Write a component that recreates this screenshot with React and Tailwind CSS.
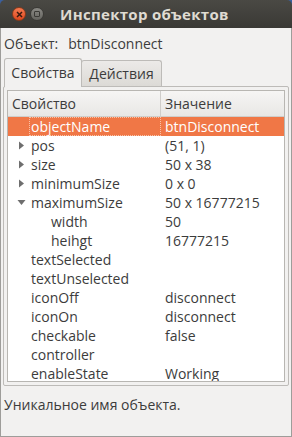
import React from "react";

const rows = [
  { name: "objectName", value: "btnDisconnect", sel: true, level: 0 },
  { name: "pos", value: "(51, 1)", arrow: "right", level: 0 },
  { name: "size", value: "50 x 38", arrow: "right", level: 0 },
  { name: "minimumSize", value: "0 x 0", arrow: "right", level: 0 },
  { name: "maximumSize", value: "50 x 16777215", arrow: "down", level: 0 },
  { name: "width", value: "50", level: 1 },
  { name: "heihgt", value: "16777215", level: 1 },
  { name: "textSelected", value: "", level: 0 },
  { name: "textUnselected", value: "", level: 0 },
  { name: "iconOff", value: "disconnect", level: 0 },
  { name: "iconOn", value: "disconnect", level: 0 },
  { name: "checkable", value: "false", level: 0 },
  { name: "controller", value: "", level: 0 },
  { name: "enableState", value: "Working", level: 0 },
];

function Arrow({ dir }) {
  if (dir === "right")
    return (
      <svg width="7" height="9" viewBox="0 0 7 9" className="absolute left-[10px] top-[5px]">
        <path d="M1 0.5 L6 4.5 L1 8.5 Z" fill="#6e6e6e" />
      </svg>
    );
  return (
    <svg width="9" height="7" viewBox="0 0 9 7" className="absolute left-[9px] top-[6px]">
      <path d="M0.5 1 L8.5 1 L4.5 6 Z" fill="#6e6e6e" />
    </svg>
  );
}

function nameClass(r) {
  if (r.sel)
    return "w-[132px] ml-[21px] pl-[1px] flex items-center border border-dotted border-[#f9c2a8]";
  if (r.level) return "w-[153px] pl-[43px] flex items-center";
  return "w-[153px] pl-[23px] flex items-center";
}

export default function App() {
  return (
    <div
      className="w-[292px] h-[437px] bg-[#3a5f9e] text-[14px] leading-none"
      style={{ fontFamily: '"Open Sans", "Noto Sans", sans-serif' }}
    >
      <div className="w-full h-full flex flex-col rounded-t-[5px] overflow-hidden">
        {/* title bar */}
        <div className="h-[28px] bg-gradient-to-b from-[#4a4944] to-[#3a3935] flex items-center pl-[12px] shrink-0">
          <div className="w-[14px] h-[14px] rounded-full bg-gradient-to-b from-[#f47a50] to-[#e0461c] border border-[#8a3a1a] flex items-center justify-center">
            <svg width="7" height="7" viewBox="0 0 7 7">
              <path d="M1 1 L6 6 M6 1 L1 6" stroke="#3a1a10" strokeWidth="1.5" />
            </svg>
          </div>
          <div className="ml-[4px] w-[14px] h-[14px] rounded-full bg-gradient-to-b from-[#8a8984] to-[#65645f] border border-[#3a3935] flex items-center justify-center">
            <div className="w-[6px] h-[6px] border border-[#3a3935] rounded-[1px]" />
          </div>
          <div className="ml-[16px] text-[#dfdbd2] font-bold text-[15px] tracking-[0.3px]">Инспектор объектов</div>
        </div>
        {/* body */}
        <div className="flex-1 bg-[#f2f1f0] border-x border-b border-[#9e9d9a] flex flex-col text-[#3c3c3c]">
          <div className="h-[30px] flex items-center pl-[3px] pt-[1px]">
            <span>Объект:</span>
            <span className="ml-[10px]">btnDisconnect</span>
          </div>
          {/* tabs */}
          <div className="flex pl-[3px] h-[28px] items-end">
            <div className="h-[29px] w-[78px] -mb-[1px] relative z-10 bg-[#f2f1f0] border border-b-0 border-[#bdbbb8] rounded-t-[3px] flex items-center justify-center pb-[1px]">
              Свойства
            </div>
            <div className="h-[26px] w-[81px] -ml-[1px] bg-gradient-to-b from-[#eceae8] to-[#dcdad6] border border-b-0 border-[#bdbbb8] rounded-t-[3px] flex items-center justify-center">
              Действия
            </div>
          </div>
          <div className="mx-[2px] h-[300px] border border-[#bdbbb8] rounded-[2px] p-[3px]">
            <div className="h-full bg-white border border-[#b8b6b2] flex flex-col overflow-hidden">
              <div className="h-[26px] shrink-0 flex bg-gradient-to-b from-[#f6f5f4] to-[#e8e7e5] border-b border-[#cfcdca]">
                <div className="w-[153px] border-r border-[#cfcdca] flex items-center pl-[4px]">Свойство</div>
                <div className="flex-1 flex items-center pl-[4px]">Значение</div>
              </div>
              {rows.map((r) => (
                <div
                  key={r.name}
                  className={
                    r.sel
                      ? "h-[19px] shrink-0 flex relative bg-[#f07746] text-white"
                      : "h-[19px] shrink-0 flex relative"
                  }
                >
                  {r.arrow && <Arrow dir={r.arrow} />}
                  <div className={nameClass(r)}>{r.name}</div>
                  <div className="flex-1 flex items-center pl-[4px]">{r.value}</div>
                </div>
              ))}
            </div>
          </div>
          <div className="h-[38px] flex items-center pl-[3px] pb-[1px]">Уникальное имя объекта.</div>
        </div>
      </div>
    </div>
  );
}
